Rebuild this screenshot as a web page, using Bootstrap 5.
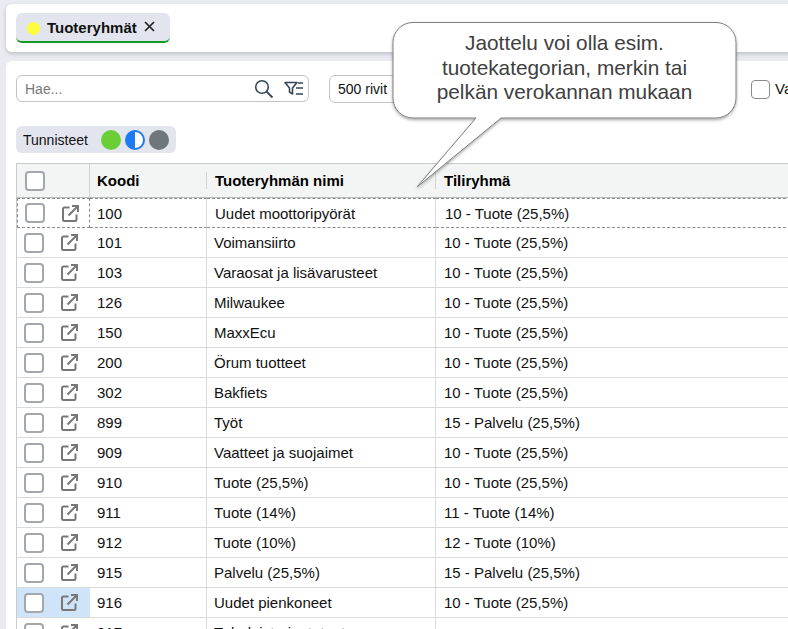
<!DOCTYPE html>
<html lang="fi">
<head>
<meta charset="utf-8">
<link href="https://cdn.jsdelivr.net/npm/bootstrap@5.3.0/dist/css/bootstrap.min.css" rel="stylesheet">
<style>
html,body{height:629px;overflow:hidden;}
body{background:#e9ebf0;font-family:"Liberation Sans",Arial,sans-serif;font-size:14px;color:#111;position:relative;}
.app-shell{width:806px;padding:4px 0 0 6px;}
.top-panel{background:#fff;height:48px;border-radius:6px;box-shadow:0 2px 4px rgba(0,0,0,.18);padding:9px 10px;}
.tab-chip{background:#e2e5ee;height:30px;width:154px;border-bottom:2px solid #159a25;border-radius:6px;padding:2px 15px 0 11px;font-weight:700;font-size:15px;}
.tab-close{margin-left:auto;margin-top:-3px;}
.dot-yellow{width:13px;height:13px;border-radius:50%;background:#fdfd3c;margin-right:7px;}
.main-panel{background:#fff;margin-top:9px;height:600px;border-radius:6px;padding:14px 0 0 10px;}
.search-box{width:293px;height:27px;border:1px solid #c4c4c8;border-radius:6px;padding:1px 4px 0 8px;}
.search-box input{border:0;outline:0;flex:1;min-width:0;font-size:14px;padding:0;color:#333;background:transparent;}
.search-box input::placeholder{color:#777;}
.lens-icon{margin-right:10px;}
.rows-select{width:110px;height:28px;border:1px solid #c4c4c8;border-radius:6px;margin-left:20px;padding-left:8px;}
.check-box{display:block;width:20px;height:20px;border:2px solid #a4a8ad;border-radius:4px;background:#fff;flex:none;}
.tool-row{height:28px;}
.only-active{margin-left:auto;width:55px;gap:5px;white-space:nowrap;overflow:hidden;height:28px;font-size:15px;}
.only-active .check-box{border-width:1px;border-color:#8a8a8a;width:19px;height:19px;}
.tag-bar{margin-top:23px;background:#e2e5ee;border-radius:6px;height:27px;width:160px;padding:1px 7px 0;gap:4px;}
.tag-bar span:first-child{margin-right:9px;}
.tag-dot{width:20px;height:20px;border-radius:50%;flex:none;margin-top:-1px;}
.dot-green{background:#6cce37;}
.dot-half{border:2px solid #1f7bf2;background:linear-gradient(90deg,#1f7bf2 50%,#fff 50%);}
.dot-gray{background:#6f767c;}
.grid-table{margin-top:10px;width:790px;table-layout:fixed;border-collapse:separate;border-spacing:0;border-top:1px solid #c8cacb;border-left:1px solid #c8cacb;margin-bottom:0;}
.grid-table th{height:34px;background:#f3f5f5;font-size:15px;font-weight:700;color:#000;padding:2px 7px 0;position:relative;border-bottom:1px solid #bbb;vertical-align:middle;}
.grid-table th:first-child{border-right:1px solid #d0d2d3;}
.grid-table th.sep-cell{padding-left:8px;}
.grid-table td{height:30px;padding:1px 7px 0;border-bottom:1px solid #d9dbdc;border-right:1px solid #d9dbdc;vertical-align:middle;color:#111;font-size:15px;white-space:nowrap;}
.grid-table td:last-child,.grid-table th:last-child{border-right:0;padding-left:8px;}
.grid-table td:first-child{border-right:0;}
.grid-table th.sep-cell::before{content:"";position:absolute;left:-1px;top:8px;bottom:8px;width:1px;background:#d2d4d5;}
.action-wrap{padding:0 12px 0 7px;}
.row-dashed td{border-top:1px dashed #8a8a8a;border-bottom:1px dashed #8a8a8a;padding-top:2px;}
.row-dashed td:first-child{border-left:1px dashed #8a8a8a;border-right:1px dashed #8a8a8a;padding-top:0;}
.row-dashed .action-wrap{padding-right:10px;}
.row-dashed td:nth-child(3){padding-left:8px;}
.row-dashed td:last-child{padding-left:9px;}
.row-selected td:first-child{background:#cfe4f8;}
.callout{position:absolute;left:388px;top:17px;width:356px;height:180px;}
.callout svg{position:absolute;left:0;top:0;}
.callout-text{position:absolute;left:5px;top:14px;width:343px;text-align:center;font-size:20.8px;line-height:24.5px;color:#404040;}
</style>
</head>
<body>
<div class="app-shell">
  <div class="top-panel">
    <div class="tab-chip d-flex align-items-center">
      <span class="dot-yellow"></span><span>Tuoteryhmät</span>
      <svg class="tab-close" width="11" height="11" viewBox="0 0 11 11"><path d="M1 1l9 9M10 1l-9 9" stroke="#222" stroke-width="1.7" fill="none"/></svg>
    </div>
  </div>
  <div class="main-panel">
    <div class="d-flex tool-row">
      <div class="search-box d-flex align-items-center">
        <input type="text" placeholder="Hae...">
        <svg width="20" height="20" viewBox="0 0 20 20" class="lens-icon"><circle cx="8" cy="8" r="6.3" fill="none" stroke="#34465a" stroke-width="1.6"/><path d="M12.6 12.6L18.5 18.5" stroke="#34465a" stroke-width="1.9"/></svg>
        <svg width="20" height="18" viewBox="0 0 20 18"><path d="M1 2.5h12l-4.5 5.500v6l-3-2V8z" fill="none" stroke="#34465a" stroke-width="1.6" stroke-linejoin="round"/><path d="M14 3h5M12 8h7M12 14h7" stroke="#34465a" stroke-width="1.5"/></svg>
      </div>
      <div class="rows-select d-flex align-items-center">500 rivit</div>
      <label class="only-active d-flex align-items-center"><span class="check-box"></span><span>Vain</span></label>
    </div>
    <div class="tag-bar d-flex align-items-center">
      <span>Tunnisteet</span>
      <span class="tag-dot dot-green"></span><span class="tag-dot dot-half"></span><span class="tag-dot dot-gray"></span>
    </div>
    <table class="grid-table">
      <colgroup><col style="width:73px"><col style="width:117px"><col style="width:229px"><col></colgroup>
      <thead><tr><th class="p-0"><span class="check-box ms-2"></span></th><th>Koodi</th><th class="sep-cell">Tuoteryhmän nimi</th><th class="sep-cell">Tiliryhmä</th></tr></thead>
      <tbody id="rows"></tbody>
    </table>
  </div>
</div>
<div class="callout">
  <svg width="356" height="180" viewBox="0 0 356 180">
    <defs><filter id="sh" x="-5%" y="-5%" width="110%" height="115%"><feDropShadow dx="0" dy="1.5" stdDeviation="1.5" flood-color="#000" flood-opacity=".35"/></filter></defs>
    <path filter="url(#sh)" d="M25 5.500H328a20 20 0 0 1 20 20V81a20 20 0 0 1-20 20H113L29 170L88 101H25a20 20 0 0 1-20-20V25.500a20 20 0 0 1 20-20Z" fill="#fff" stroke="#7f7f7f" stroke-width="1"/>
  </svg>
  <div class="callout-text">Jaottelu voi olla esim.<br>tuotekategorian, merkin tai<br>pelkän verokannan mukaan</div>
</div>
<script>
var data=[["100","Uudet moottoripyörät","10 - Tuote (25,5%)"],["101","Voimansiirto","10 - Tuote (25,5%)"],["103","Varaosat ja lisävarusteet","10 - Tuote (25,5%)"],["126","Milwaukee","10 - Tuote (25,5%)"],["150","MaxxEcu","10 - Tuote (25,5%)"],["200","Örum tuotteet","10 - Tuote (25,5%)"],["302","Bakfiets","10 - Tuote (25,5%)"],["899","Työt","15 - Palvelu (25,5%)"],["909","Vaatteet ja suojaimet","10 - Tuote (25,5%)"],["910","Tuote (25,5%)","10 - Tuote (25,5%)"],["911","Tuote (14%)","11 - Tuote (14%)"],["912","Tuote (10%)","12 - Tuote (10%)"],["915","Palvelu (25,5%)","15 - Palvelu (25,5%)"],["916","Uudet pienkoneet","10 - Tuote (25,5%)"],["917","Tuholaistorjuntatuote",""]];
var ic='<svg width="17" height="17" viewBox="0 0 17 17" class="ms-auto flex-shrink-0"><path d="M7.500 2.500H2.300a1.300 1.300 0 0 0-1.300 1.300V14.700a1.300 1.300 0 0 0 1.300 1.300H13.200a1.300 1.300 0 0 0 1.300-1.300V9.500" fill="none" stroke="#777" stroke-width="2"/><path d="M6.500 10.500L16 1M10 1h6V7" fill="none" stroke="#777" stroke-width="2"/></svg>';
document.getElementById("rows").innerHTML=data.map(function(r,i){
 var c=i==0?"row-dashed":(i==13?"row-selected":"");
 return '<tr class="'+c+'"><td class="p-0"><div class="action-wrap d-flex align-items-center"><span class="check-box"></span>'+ic+'</div></td><td>'+r[0]+'</td><td>'+r[1]+'</td><td>'+r[2]+'</td></tr>';
}).join("");
</script>
</body>
</html>
